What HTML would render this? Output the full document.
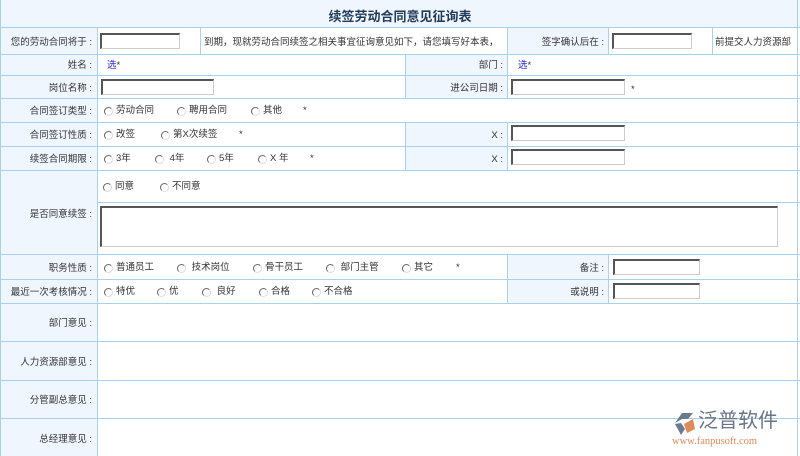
<!DOCTYPE html>
<html><head><meta charset="utf-8"><style>
*{margin:0;padding:0;box-sizing:border-box}
body{width:800px;height:456px;overflow:hidden;background:#fff;position:relative;font-family:"Liberation Sans","Noto Sans CJK SC",sans-serif;font-size:9.5px;color:#333}
.a{position:absolute}
.h{position:absolute;height:1px;background:#a8d0ef}
.v{position:absolute;width:1px;background:#a8d0ef}
.bg{position:absolute;background:#eff6fd}
.t{position:absolute;line-height:12px;white-space:nowrap;margin-top:2px}
.r{text-align:right}
.in{position:absolute;border:1px solid #ccc;border-top:2px solid #555;border-left:2px solid #555;background:#fff;height:16px}
.rd{position:absolute;line-height:12px;white-space:nowrap;margin-top:1px;display:flex;align-items:center}
.rd:before{content:"";display:block;width:7px;height:7px;border:1px solid #666;border-radius:50%;margin-right:3px;border-bottom-color:#ddd;border-right-color:#ddd}
.s{color:#2020e0}
</style></head><body>
<div class="bg" style="left:0;top:0;width:800px;height:28px"></div>
<div class="bg" style="left:0;top:28px;width:97px;height:428px"></div>
<div class="bg" style="left:507px;top:28px;width:101px;height:27px"></div>
<div class="bg" style="left:405px;top:55px;width:102px;height:44px"></div>
<div class="bg" style="left:405px;top:122px;width:102px;height:48px"></div>
<div class="bg" style="left:507px;top:255px;width:101px;height:48px"></div>
<div class="h" style="left:0;top:27px;width:800px"></div>
<div class="h" style="left:0;top:54px;width:800px"></div>
<div class="h" style="left:0;top:75px;width:800px"></div>
<div class="h" style="left:0;top:98px;width:800px"></div>
<div class="h" style="left:0;top:122px;width:800px"></div>
<div class="h" style="left:0;top:146px;width:800px"></div>
<div class="h" style="left:0;top:170px;width:800px"></div>
<div class="h" style="left:97px;top:202px;width:703px"></div>
<div class="h" style="left:0;top:254px;width:800px"></div>
<div class="h" style="left:0;top:279px;width:800px"></div>
<div class="h" style="left:0;top:303px;width:800px"></div>
<div class="h" style="left:0;top:341px;width:800px"></div>
<div class="h" style="left:0;top:380px;width:800px"></div>
<div class="h" style="left:0;top:418px;width:800px"></div>
<div class="v" style="left:0;top:0;height:456px"></div>
<div class="v" style="left:797px;top:0;height:456px"></div>
<div class="v" style="left:97px;top:28px;height:428px"></div>
<div class="v" style="left:200px;top:28px;height:27px"></div>
<div class="v" style="left:507px;top:28px;height:27px"></div>
<div class="v" style="left:608px;top:28px;height:27px"></div>
<div class="v" style="left:712px;top:28px;height:27px"></div>
<div class="v" style="left:405px;top:55px;height:44px"></div>
<div class="v" style="left:507px;top:55px;height:44px"></div>
<div class="v" style="left:405px;top:122px;height:48px"></div>
<div class="v" style="left:507px;top:122px;height:48px"></div>
<div class="v" style="left:507px;top:255px;height:48px"></div>
<div class="v" style="left:608px;top:255px;height:48px"></div>
<div class="t" style="left:0;width:800px;top:7px;text-align:center;font-size:13px;font-weight:bold;color:#1f3a5a;line-height:15px">续签劳动合同意见征询表</div>
<div class="t r" style="left:0;width:92px;top:35px">您的劳动合同将于 :</div>
<div class="t r" style="left:0;width:92px;top:58px">姓名 :</div>
<div class="t r" style="left:0;width:92px;top:81px">岗位名称 :</div>
<div class="t r" style="left:0;width:92px;top:104px">合同签订类型 :</div>
<div class="t r" style="left:0;width:92px;top:128px">合同签订性质 :</div>
<div class="t r" style="left:0;width:92px;top:152px">续签合同期限 :</div>
<div class="t r" style="left:0;width:92px;top:207px">是否同意续签 :</div>
<div class="t r" style="left:0;width:92px;top:261px">职务性质 :</div>
<div class="t r" style="left:0;width:92px;top:285px">最近一次考核情况 :</div>
<div class="t r" style="left:0;width:92px;top:316px">部门意见 :</div>
<div class="t r" style="left:0;width:92px;top:355px">人力资源部意见 :</div>
<div class="t r" style="left:0;width:92px;top:393px">分管副总意见 :</div>
<div class="t r" style="left:0;width:92px;top:432px">总经理意见 :</div>
<div class="t" style="left:204px;top:35px">到期，现就劳动合同续签之相关事宜征询意见如下，请您填写好本表，</div>
<div class="t r" style="left:507px;width:97px;top:35px">签字确认后在 :</div>
<div class="t" style="left:715px;top:35px">前提交人力资源部</div>
<div class="t r" style="left:405px;width:98px;top:58px">部门 :</div>
<div class="t r" style="left:405px;width:98px;top:81px">进公司日期 :</div>
<div class="t r" style="left:405px;width:98px;top:128px">X :</div>
<div class="t r" style="left:405px;width:98px;top:152px">X :</div>
<div class="t r" style="left:507px;width:97px;top:261px">备注 :</div>
<div class="t r" style="left:507px;width:97px;top:285px">或说明 :</div>
<div class="t" style="left:107px;top:58px"><span class="s">选</span>*</div>
<div class="t" style="left:518px;top:58px"><span class="s">选</span>*</div>
<div class="t" style="left:631px;top:82px">*</div>
<div class="in" style="left:100px;top:33px;width:80px"></div>
<div class="in" style="left:612px;top:33px;width:80px"></div>
<div class="in" style="left:101px;top:79px;width:113px"></div>
<div class="in" style="left:511px;top:79px;width:114px"></div>
<div class="in" style="left:511px;top:125px;width:114px"></div>
<div class="in" style="left:511px;top:149px;width:114px"></div>
<div class="in" style="left:613px;top:259px;width:87px"></div>
<div class="in" style="left:613px;top:283px;width:87px"></div>
<div class="in" style="left:100px;top:206px;width:678px;height:41px"></div>
<div class="rd" style="left:104px;top:104px">劳动合同</div>
<div class="rd" style="left:177px;top:104px">聘用合同</div>
<div class="rd" style="left:251px;top:104px">其他</div>
<div class="t" style="left:303px;top:103px">*</div>
<div class="rd" style="left:104px;top:128px">改签</div>
<div class="rd" style="left:161px;top:128px">第X次续签</div>
<div class="t" style="left:239px;top:127px">*</div>
<div class="rd" style="left:104px;top:152px">3年</div>
<div class="rd" style="left:155px;top:152px">&nbsp;4年</div>
<div class="rd" style="left:207px;top:152px">5年</div>
<div class="rd" style="left:258px;top:152px">X 年</div>
<div class="t" style="left:310px;top:151px">*</div>
<div class="rd" style="left:103px;top:180px">同意</div>
<div class="rd" style="left:160px;top:180px">不同意</div>
<div class="rd" style="left:104px;top:261px">普通员工</div>
<div class="rd" style="left:177px;top:261px">&nbsp;技术岗位</div>
<div class="rd" style="left:253px;top:261px">骨干员工</div>
<div class="rd" style="left:326px;top:261px">&nbsp;部门主管</div>
<div class="rd" style="left:402px;top:261px">其它</div>
<div class="t" style="left:456px;top:260px">*</div>
<div class="rd" style="left:104px;top:285px">特优</div>
<div class="rd" style="left:157px;top:285px">优</div>
<div class="rd" style="left:202px;top:285px">&nbsp;良好</div>
<div class="rd" style="left:259px;top:285px">合格</div>
<div class="rd" style="left:312px;top:285px">不合格</div>
<svg class="a" style="left:671px;top:411px" width="28" height="26" viewBox="0 0 28 26">
<path d="M4 12 L11 2 L22 2 L17 8 L11 8 Z" fill="#6a7a90"/>
<path d="M4 13 L10 24 L14 18 L10 12 Z" fill="#6a7a90"/>
<path d="M13 13 L22 8 L24 18 L16 22 Z" fill="#e08a5a"/>
</svg>
<div class="a" style="left:698px;top:410px;font-size:20px;line-height:22px;color:#6a7585;white-space:nowrap">泛普软件</div>
<div class="a" style="left:672px;top:436px;font-family:'Liberation Serif',serif;font-size:10.5px;line-height:12px;color:#e08a5a;white-space:nowrap">www.fanpusoft.com</div>
</body></html>
